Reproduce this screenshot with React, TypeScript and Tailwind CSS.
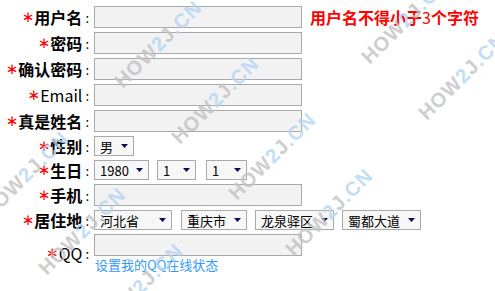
import React from "react";

const Label = ({ text, bold = true }: { text: string; bold?: boolean }) => (
  <div className="w-[89px] shrink-0 flex items-center justify-end whitespace-nowrap">
    <span className="text-[#ff0000] text-[15px] leading-none font-['DejaVu_Sans',sans-serif]">∗</span>
    <span className={bold ? "font-bold text-[16px] leading-none" : "text-[16px] leading-none"}>{text}</span>
    <span className="text-[13px] leading-none ml-[3px]">:</span>
  </div>
);

const Input = () => (
  <input
    type="text"
    readOnly
    className="ml-[5px] w-[208px] h-[22px] border border-[#a7a9ac] bg-[#f2f2f2] outline-none"
  />
);

const Sel = ({ w, text, ml }: { w: string; text: string; ml: string }) => (
  <div
    className={`${w} ${ml} h-[20px] border border-[#a7a9ac] bg-[#f7f7f7] flex items-center justify-between pl-[5px] pr-[5px] text-[13px] leading-none`}
  >
    <span>{text}</span>
    <svg width="7" height="4" viewBox="0 0 7 4">
      <path d="M0 0H7L3.5 4Z" fill="#0b0b55" />
    </svg>
  </div>
);

const WM = ({ pos }: { pos: string }) => (
  <div
    className={`absolute ${pos} -translate-x-1/2 -translate-y-1/2 -rotate-45 whitespace-nowrap font-bold text-[20px] tracking-[1px] leading-none pointer-events-none opacity-80 font-['Liberation_Sans',sans-serif]`}
  >
    <span className="text-[#c2c2c2]">HOW</span>
    <span className="text-[#b5d5f2]">2</span>
    <span className="text-[#c2c2c2]">J</span>
    <span className="text-[#b5d5f2]">.CN</span>
  </div>
);

export default function App() {
  return (
    <div className="relative w-[495px] h-[291px] overflow-hidden bg-white text-black font-['Noto_Sans_CJK_SC',sans-serif]">
      <div className="flex flex-col gap-[4px] pt-[6px]">
        <div className="flex items-center h-[22px]">
          <Label text="用户名" />
          <Input />
          <span className="ml-[8px] text-[#ff0000] font-bold text-[16px] leading-none whitespace-nowrap">
            用户名不得小于<span className="font-normal">3</span>个字符
          </span>
        </div>
        <div className="flex items-center h-[22px]">
          <Label text="密码" />
          <Input />
        </div>
        <div className="flex items-center h-[22px]">
          <Label text="确认密码" />
          <Input />
        </div>
        <div className="flex items-center h-[22px]">
          <Label text="Email" bold={false} />
          <Input />
        </div>
        <div className="flex items-center h-[22px]">
          <Label text="真是姓名" />
          <Input />
        </div>
        <div className="flex items-center h-[20px]">
          <Label text="性别" />
          <Sel w="w-[40px]" ml="ml-[5px]" text="男" />
        </div>
        <div className="flex items-center h-[20px]">
          <Label text="生日" />
          <Sel w="w-[55px]" ml="ml-[5px]" text="1980" />
          <Sel w="w-[39px]" ml="ml-[8px]" text="1" />
          <Sel w="w-[41px]" ml="ml-[10px]" text="1" />
        </div>
        <div className="flex items-center h-[22px]">
          <Label text="手机" />
          <Input />
        </div>
        <div className="flex items-center h-[20px]">
          <Label text="居住地" />
          <Sel w="w-[78px]" ml="ml-[5px]" text="河北省" />
          <Sel w="w-[66px]" ml="ml-[9px]" text="重庆市" />
          <Sel w="w-[79px]" ml="ml-[8px]" text="龙泉驿区" />
          <Sel w="w-[79px]" ml="ml-[8px]" text="蜀都大道" />
        </div>
        <div className="flex items-center">
          <Label text="QQ" bold={false} />
          <div className="flex flex-col">
            <Input />
            <div className="ml-[6px] mt-[2px] text-[13px] leading-[14px] text-[#3399ff] whitespace-nowrap">
              设置我的QQ在线状态
            </div>
          </div>
        </div>
      </div>

      <WM pos="left-[158px] top-[44px]" />
      <WM pos="left-[215px] top-[100px]" />
      <WM pos="left-[272px] top-[156px]" />
      <WM pos="left-[329px] top-[212px]" />
      <WM pos="left-[25px] top-[175px]" />
      <WM pos="left-[82px] top-[231px]" />
      <WM pos="left-[139px] top-[287px]" />
      <WM pos="left-[405px] top-[20px]" />
      <WM pos="left-[462px] top-[76px]" />
    </div>
  );
}
